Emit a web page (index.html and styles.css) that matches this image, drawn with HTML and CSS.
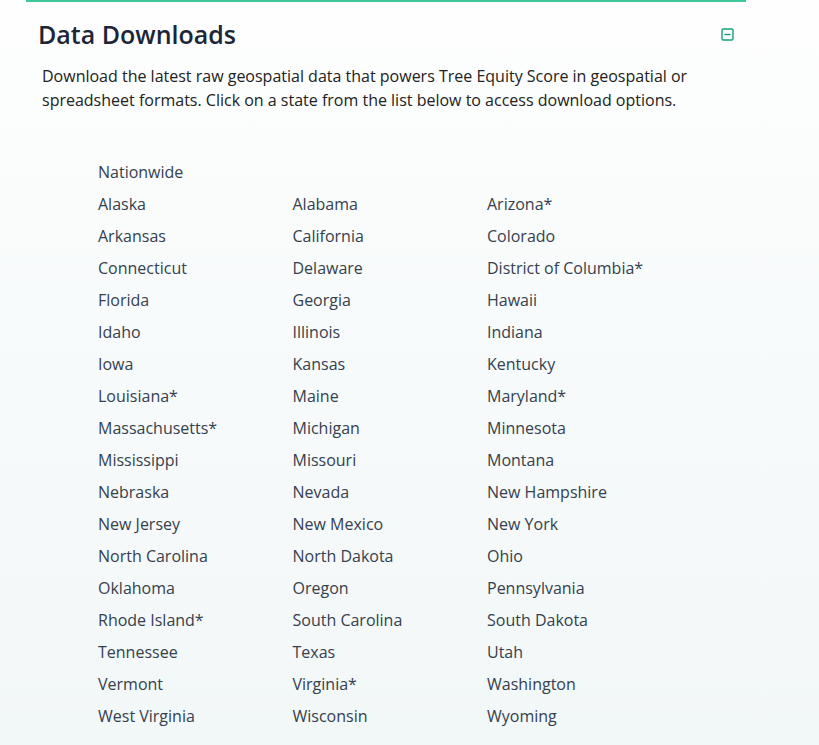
FILE: index.html
```html
<!DOCTYPE html>
<html lang="en">
<head>
<meta charset="utf-8">
<title>Data Downloads</title>
<link rel="stylesheet" href="styles.css">
</head>
<body>
<section class="card">
  <header class="card-head">
    <h2 class="title">Data Downloads</h2>
    <button class="toggle" aria-label="Collapse">
      <svg width="13" height="13" viewBox="0 0 13 13"><rect x="1" y="1" width="11" height="11" rx="1.2" fill="none" stroke="currentColor" stroke-width="1.4"/><line x1="3.5" y1="6.5" x2="9.5" y2="6.5" stroke="currentColor" stroke-width="1.4"/></svg>
    </button>
  </header>
  <p class="intro">Download the latest raw geospatial data that powers Tree Equity Score in geospatial or spreadsheet formats. Click on a state from the list below to access download options.</p>
  <ul class="states">
    <li class="full">Nationwide</li>
    <li>Alaska</li><li>Alabama</li><li>Arizona*</li>
    <li>Arkansas</li><li>California</li><li>Colorado</li>
    <li>Connecticut</li><li>Delaware</li><li>District of Columbia*</li>
    <li>Florida</li><li>Georgia</li><li>Hawaii</li>
    <li>Idaho</li><li>Illinois</li><li>Indiana</li>
    <li>Iowa</li><li>Kansas</li><li>Kentucky</li>
    <li>Louisiana*</li><li>Maine</li><li>Maryland*</li>
    <li>Massachusetts*</li><li>Michigan</li><li>Minnesota</li>
    <li>Mississippi</li><li>Missouri</li><li>Montana</li>
    <li>Nebraska</li><li>Nevada</li><li>New Hampshire</li>
    <li>New Jersey</li><li>New Mexico</li><li>New York</li>
    <li>North Carolina</li><li>North Dakota</li><li>Ohio</li>
    <li>Oklahoma</li><li>Oregon</li><li>Pennsylvania</li>
    <li>Rhode Island*</li><li>South Carolina</li><li>South Dakota</li>
    <li>Tennessee</li><li>Texas</li><li>Utah</li>
    <li>Vermont</li><li>Virginia*</li><li>Washington</li>
    <li>West Virginia</li><li>Wisconsin</li><li>Wyoming</li>
  </ul>
</section>
</body>
</html>
```
FILE: styles.css
```css
html, body {
  margin: 0;
  padding: 0;
}
body {
  min-height: 745px;
  background: linear-gradient(to bottom, #fefefe 0%, #f8fbfb 40%, #f2f7f7 100%);
  font-family: "Open Sans", "Noto Sans", sans-serif;
  color: #222;
}
.card {
  margin: 0 0 0 26px;
  width: 720px;
  border-top: 2px solid #3ec79b;
}
.card-head {
  display: flex;
  align-items: flex-start;
  justify-content: space-between;
  padding: 16px 12px 0 12px;
}
.title {
  margin: 0;
  font-size: 25px;
  line-height: 32px;
  font-weight: 600;
  color: #1c2638;
}
.toggle {
  margin: 10px 0 0 0;
  padding: 0;
  border: 0;
  background: none;
  color: #17a077;
  display: flex;
}
.intro {
  margin: 14px 0 0 16px;
  width: 680px;
  font-size: 16px;
  line-height: 24px;
  color: #222;
}
.states {
  list-style: none;
  margin: 44px 0 0 72px;
  padding: 0;
  display: grid;
  grid-template-columns: repeat(3, 194.5px);
  grid-auto-rows: 32px;
  font-size: 16px;
  line-height: 32px;
  color: #353f4e;
}
.states .full {
  grid-column: 1 / -1;
}
```
